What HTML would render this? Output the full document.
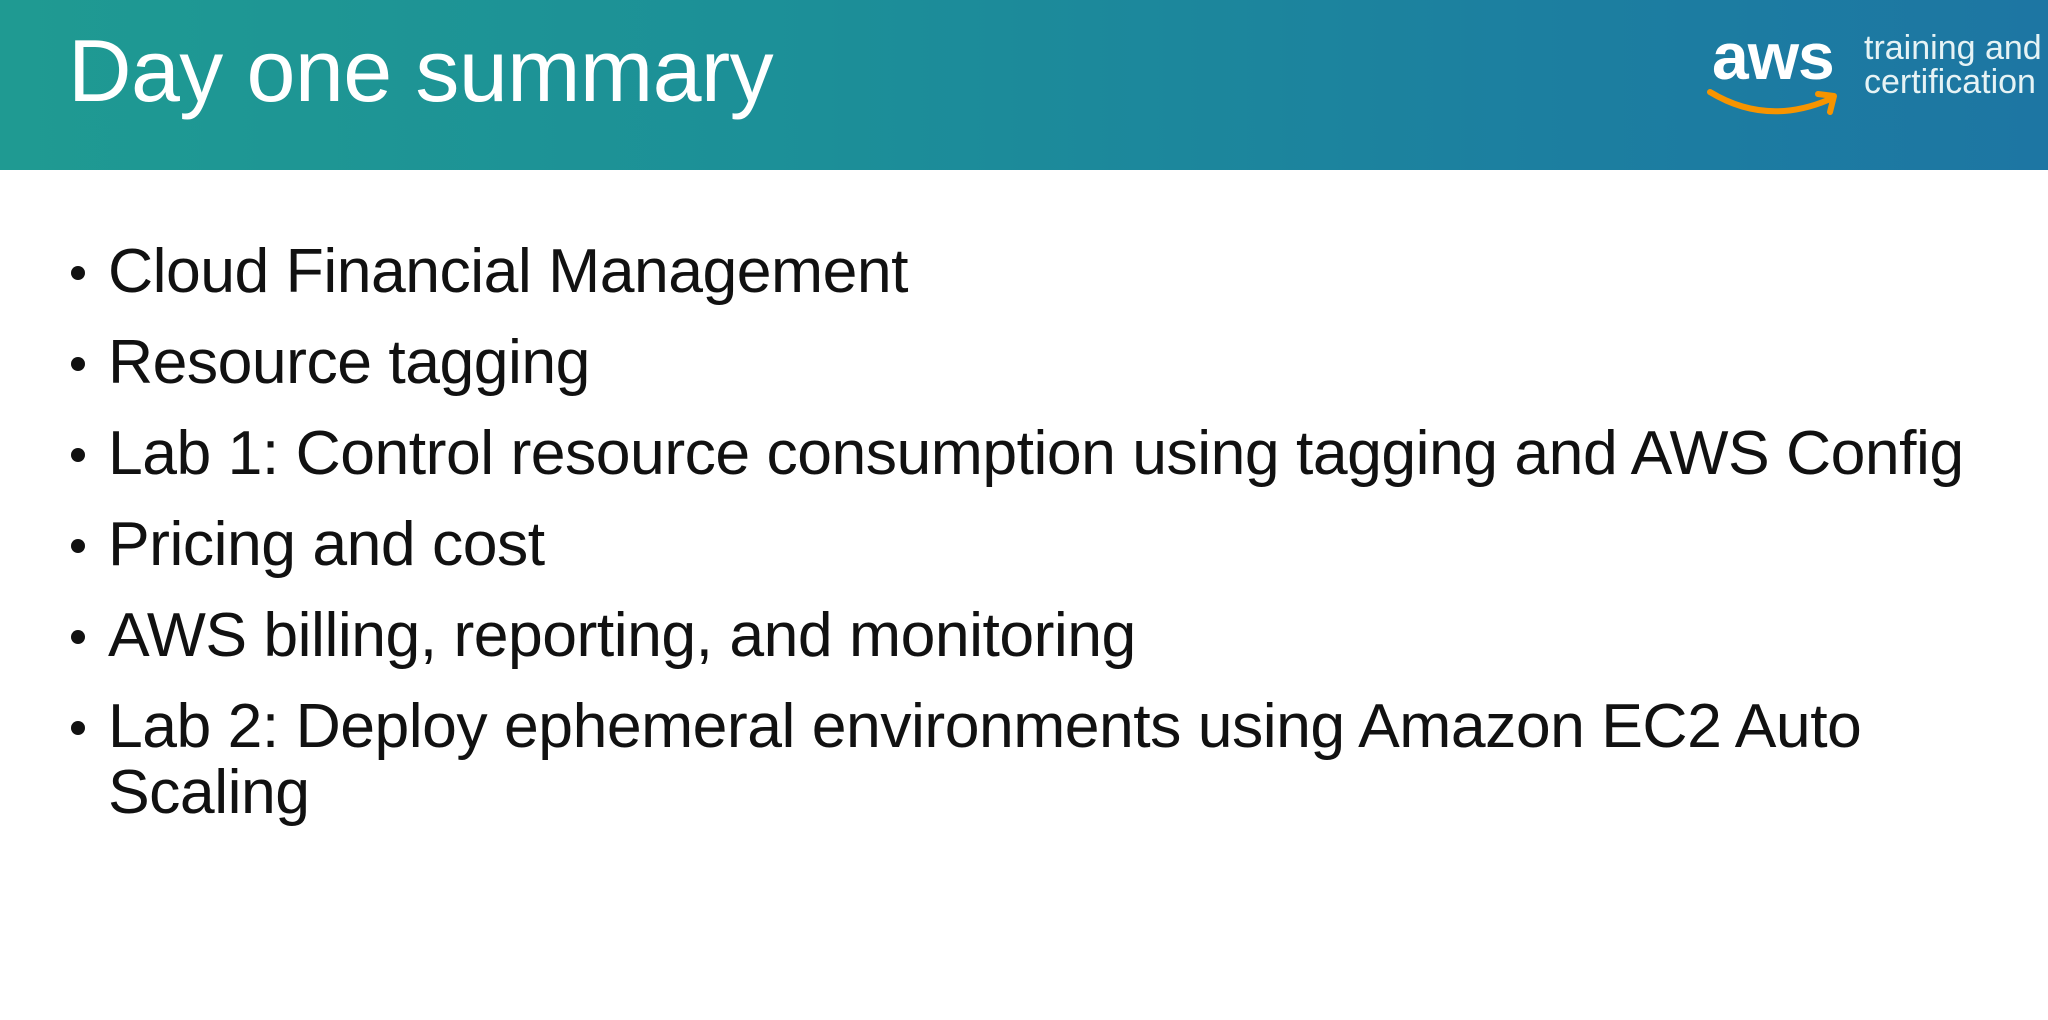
<!DOCTYPE html>
<html><head><meta charset="utf-8"><style>
*{margin:0;padding:0}
body{width:2048px;height:1020px;background:#fff;position:relative;overflow:hidden;font-family:"Liberation Sans",sans-serif}
.hdr{position:absolute;left:0;top:0;width:2048px;height:170px;background:linear-gradient(90deg,#1f9a92 0%,#1c8f98 40%,#1c7fa0 75%,#1d76a3 100%)}
.title{position:absolute;left:68px;top:20px;font-size:88px;color:#fff;letter-spacing:-0.6px;white-space:nowrap}
.aws{position:absolute;left:1712px;top:18px;font-size:66px;font-weight:bold;color:#fff;letter-spacing:-1px}
.tc{position:absolute;left:1864px;top:31px;font-size:34px;line-height:34px;color:#e6f3f5}
ul{position:absolute;left:0;top:238px;list-style:none}
li{position:relative;padding-left:108px;font-size:62.5px;line-height:66px;margin-bottom:25px;color:#111;white-space:nowrap;letter-spacing:-0.5px}
li:before{content:"";position:absolute;left:71px;top:28px;width:14px;height:14px;border-radius:50%;background:#111}
</style></head><body>
<div class="hdr"></div>
<div class="title">Day one summary</div>
<div class="aws">aws</div>
<svg style="position:absolute;left:1706px;top:86px" width="140" height="36" viewBox="0 0 140 36"><path d="M4 6 Q60 40 122 14" stroke="#f79400" stroke-width="6" fill="none" stroke-linecap="round"/><path d="M112 8 L128 10 L124 26" stroke="#f79400" stroke-width="6" fill="none" stroke-linecap="round" stroke-linejoin="round"/></svg>
<div class="tc">training and<br>certification</div>
<ul>
<li>Cloud Financial Management</li>
<li>Resource tagging</li>
<li>Lab 1: Control resource consumption using tagging and AWS Config</li>
<li>Pricing and cost</li>
<li>AWS billing, reporting, and monitoring</li>
<li>Lab 2: Deploy ephemeral environments using Amazon EC2 Auto<br>Scaling</li>
</ul>
</body></html>
